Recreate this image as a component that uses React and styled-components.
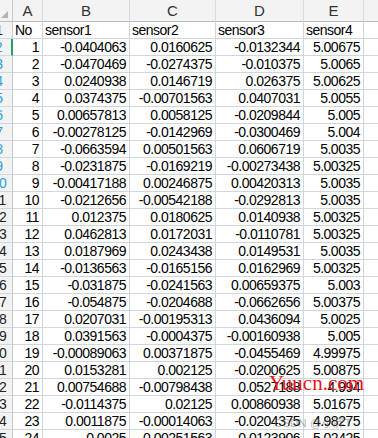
import React from 'react';
import styled, { createGlobalStyle } from 'styled-components';

const Global = createGlobalStyle`
  html, body { margin: 0; padding: 0; background: #fff; overflow: hidden; }
  body { width: 378px; height: 438px; }
`;

const DATA = [
  ['-0.0404063', '0.0160625', '-0.0132344', '5.00675'],
  ['-0.0470469', '-0.0274375', '-0.010375', '5.0065'],
  ['0.0240938', '0.0146719', '0.026375', '5.00625'],
  ['0.0374375', '-0.00701563', '0.0407031', '5.0055'],
  ['0.00657813', '0.0058125', '-0.0209844', '5.005'],
  ['-0.00278125', '-0.0142969', '-0.0300469', '5.004'],
  ['-0.0663594', '0.00501563', '0.0606719', '5.0035'],
  ['-0.0231875', '-0.0169219', '-0.00273438', '5.00325'],
  ['-0.00417188', '0.00246875', '0.00420313', '5.0035'],
  ['-0.0212656', '-0.00542188', '-0.0292813', '5.0035'],
  ['0.012375', '0.0180625', '0.0140938', '5.00325'],
  ['0.0462813', '0.0172031', '-0.0110781', '5.00325'],
  ['0.0187969', '0.0243438', '0.0149531', '5.0035'],
  ['-0.0136563', '-0.0165156', '0.0162969', '5.00325'],
  ['-0.031875', '-0.0241563', '0.00659375', '5.003'],
  ['-0.054875', '-0.0204688', '-0.0662656', '5.00375'],
  ['0.0207031', '-0.00195313', '0.0436094', '5.0025'],
  ['0.0391563', '-0.0004375', '-0.00160938', '5.005'],
  ['-0.00089063', '0.00371875', '-0.0455469', '4.99975'],
  ['0.0153281', '0.002125', '-0.0200625', '5.00875'],
  ['0.00754688', '-0.00798438', '0.0527188', '4.994'],
  ['-0.0114375', '0.02125', '0.00860938', '5.01675'],
  ['0.0011875', '-0.00014063', '-0.0204375', '4.98275'],
  ['0.0025', '0.00251563', '0.0123906', '5.02425'],
];

const GRID = '#d0d6e0';
const HEAD_BG = '#f3f3f3';

const Viewport = styled.div`
  position: relative;
  width: 378px;
  height: 438px;
  overflow: hidden;
`;

const Sheet = styled.div`
  display: grid;
  grid-template-columns: 27px 30px 87px 86px 88px 60px 80px;
  grid-template-rows: 22px;
  grid-auto-rows: 17px;
  margin-left: -14px;
  font-family: "Liberation Sans", Arial, sans-serif;
  font-size: 14px;
  letter-spacing: -0.5px;
`;

const Corner = styled.div`
  box-sizing: border-box;
  background: ${HEAD_BG};
  border-right: 1px solid #c6c9ce;
  border-bottom: 1px solid #b9bcc2;
  display: flex;
  justify-content: flex-end;
  align-items: flex-end;
  padding: 0 4px 3px 0;
`;

const ColHead = styled.div`
  box-sizing: border-box;
  background: ${HEAD_BG};
  border-right: 1px solid #d8dadd;
  border-bottom: 1px solid #b9bcc2;
  font-size: 15px;
  letter-spacing: 0;
  line-height: 22px;
  color: #333;
  text-align: center;
`;

const RowHead = styled.div`
  box-sizing: border-box;
  background: ${HEAD_BG};
  border-right: ${(p) => (p.$active ? '2px solid #1fa463' : '1px solid #c6c9ce')};
  border-bottom: 1px solid ${GRID};
  display: flex;
  justify-content: center;
  align-items: center;
  line-height: 16px;
  color: ${(p) => (p.$hl ? '#2e9ee0' : '#222')};
  white-space: nowrap;
  overflow: hidden;
`;

const Cell = styled.div`
  box-sizing: border-box;
  border-right: 1px solid ${GRID};
  border-bottom: 1px solid ${GRID};
  padding: 0 3px 0 2px;
  line-height: 16px;
  color: #000;
  text-align: ${(p) => (p.$num ? 'right' : 'left')};
  white-space: nowrap;
  overflow: hidden;
`;

const RedMark = styled.div`
  position: absolute;
  left: 269px;
  top: 371px;
  font-family: "Liberation Serif", "Times New Roman", serif;
  font-size: 21px;
  line-height: 24px;
  color: #e8141c;
  pointer-events: none;
`;

const GreyMark = styled.div`
  position: absolute;
  left: 274px;
  top: 414px;
  font-family: "Liberation Sans", "Noto Sans CJK SC", sans-serif;
  font-size: 11.5px;
  color: rgba(110, 110, 110, 0.55);
  pointer-events: none;
`;

const Triangle = () => (
  <svg width="7" height="7" viewBox="0 0 7 7">
    <polygon points="7,0 7,7 0,7" fill="#b3b3b3" />
  </svg>
);

export default function App() {
  const letters = ['A', 'B', 'C', 'D', 'E', ''];
  return (
    <Viewport>
      <Global />
      <Sheet>
        <Corner><Triangle /></Corner>
        {letters.map((l, i) => (
          <ColHead key={i}>{l}</ColHead>
        ))}
        <RowHead>1</RowHead>
        <Cell>No</Cell>
        <Cell>sensor1</Cell>
        <Cell>sensor2</Cell>
        <Cell>sensor3</Cell>
        <Cell>sensor4</Cell>
        <Cell />
        {DATA.map((row, i) => (
          <React.Fragment key={i}>
            <RowHead $active={i === 0} $hl={i + 2 <= 10}>{i + 2}</RowHead>
            <Cell $num>{i + 1}</Cell>
            {row.map((v, j) => (
              <Cell $num key={j}>{v}</Cell>
            ))}
            <Cell />
          </React.Fragment>
        ))}
      </Sheet>
      <RedMark>Yuucn.com</RedMark>
      <GreyMark>CSDN @小胖T</GreyMark>
    </Viewport>
  );
}
